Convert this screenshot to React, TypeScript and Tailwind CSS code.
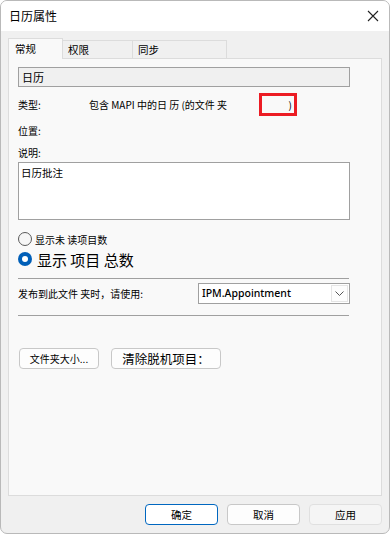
import React from "react"

const font = { fontFamily: '"Noto Sans CJK SC", "Noto Sans", sans-serif' }

function Tab({ label, active, width }: { label: string; active?: boolean; width: string }) {
  if (active) {
    return (
      <div className={`${width} h-[21px] -mb-px border border-b-0 border-[#dcdcdc] bg-[#f9f9f9] pl-[6px] text-[10.5px] leading-[20px] relative z-10`}>
        {label}
      </div>
    )
  }
  return (
    <div className={`${width} h-[18px] mt-[2px] border border-b-0 border-[#dcdcdc] bg-[#f0f0f0] pl-[5px] text-[10.5px] leading-[17px] -ml-px`}>
      {label}
    </div>
  )
}

function Btn({ label, primary, disabled, className = "" }: { label: string; primary?: boolean; disabled?: boolean; className?: string }) {
  return (
    <button
      className={`h-[21px] rounded-[4px] border whitespace-nowrap ${
        primary ? "border-[#0067c0] bg-white" : disabled ? "border-[#e0e0e0] bg-[#f5f5f5]" : "border-[#c8c8c8] bg-[#fdfdfd]"
      } ${className}`}
    >
      {label}
    </button>
  )
}

export default function App() {
  return (
    <div className="w-[390px] h-[535px] bg-white" style={font}>
      <div className="w-[390px] h-[534px] rounded-[7px] border border-[#b9b9b9] overflow-hidden bg-[#f0f0f0] flex flex-col">
        {/* 标题栏 */}
        <div className="h-[30px] bg-white flex items-center justify-between pl-[8px] pr-[9px] shrink-0">
          <span className="text-[12px] text-black">日历属性</span>
          <svg width="12" height="12" viewBox="0 0 12 12" className="mr-[1px]">
            <path d="M1 1 L11 11 M11 1 L1 11" stroke="#222" strokeWidth="1.1" />
          </svg>
        </div>

        {/* 选项卡 */}
        <div className="flex pl-[7px] mt-[7px]">
          <Tab label="常规" active width="w-[55px]" />
          <Tab label="权限" width="w-[71px]" />
          <Tab label="同步" width="w-[95px]" />
        </div>

        {/* 面板 */}
        <div className="ml-[7px] w-[374px] h-[438px] border border-[#dcdcdc] bg-[#f9f9f9] pl-[9px] text-[10px] text-black">
          <div className="mt-[8px] w-[332px] h-[20px] border border-[#a0a0a0] bg-[#f0f0f0] pl-[3px] text-[11px] leading-[18px]">
            日历
          </div>

          <div className="relative mt-[7px] h-[20px] flex items-center">
            <span className="w-[71px]">类型:</span>
            <span>包含 MAPI 中的日 历 (的文件 夹</span>
            <div className="absolute left-[241px] top-[-1px] w-[38px] h-[23px] border-[3px] border-[#ec1c24] flex items-center justify-end pr-[2px]">
              <span className="text-[10px] leading-none">)</span>
            </div>
          </div>

          <div className="mt-[6px] h-[20px] flex items-center">位置:</div>

          <div className="mt-[4px] h-[16px] flex items-center">说明:</div>

          <div className="mt-[2px] w-[332px] h-[58px] border border-[#a0a0a0] bg-white pl-[2px] pt-[1px] text-[10.5px] leading-[18px]">
            日历批注
          </div>

          <div className="mt-[11px] h-[16px] flex items-center">
            <span className="w-[14px] h-[14px] rounded-full border border-[#5a5a5a] bg-[#f6f6f6] shrink-0" />
            <span className="ml-[3px] text-[10px]">显示未 读项目数</span>
          </div>

          <div className="mt-[2px] h-[20px] flex items-center">
            <span className="w-[14px] h-[14px] rounded-full bg-[#005fb8] flex items-center justify-center shrink-0">
              <span className="w-[6px] h-[6px] rounded-full bg-white" />
            </span>
            <span className="ml-[5px] text-[15px] leading-none">显示 项目 总数</span>
          </div>

          <div className="mt-[9px] w-[331px] h-px bg-[#a0a0a0]" />

          <div className="mt-[4px] h-[21px] flex items-center">
            <span className="w-[180px]">发布到此文件 夹时，请使用:</span>
            <div className="w-[152px] h-[21px] border border-[#a0a0a0] bg-white flex items-center justify-between pl-[3px]">
              <span className="text-[10.5px] font-medium" style={{ fontFamily: '"Noto Sans", sans-serif' }}>IPM.Appointment</span>
              <span className="w-[17px] h-[17px] mr-px border border-[#e5e5e5] bg-[#fdfdfd] flex items-center justify-center">
                <svg width="9" height="6" viewBox="0 0 9 6">
                  <path d="M0.5 0.5 L4.5 4.5 L8.5 0.5" fill="none" stroke="#555" strokeWidth="1" />
                </svg>
              </span>
            </div>
          </div>

          <div className="mt-[11px] w-[331px] h-px bg-[#a0a0a0]" />

          <div className="mt-[32px] flex gap-[12px]">
            <Btn label="文件夹大小..." className="w-[80px] ml-px text-[10px] leading-[19px]" />
            <Btn label="清除脱机项目：" className="w-[110px] text-[12.5px] leading-[19px]" />
          </div>
        </div>

        {/* 底部按钮 */}
        <div className="flex justify-end gap-[9px] pr-[7px] mt-[8px] text-[10.5px] leading-[19px]">
          <Btn label="确定" primary className="w-[73px]" />
          <Btn label="取消" className="w-[73px]" />
          <Btn label="应用" disabled className="w-[73px]" />
        </div>
      </div>
    </div>
  )
}
